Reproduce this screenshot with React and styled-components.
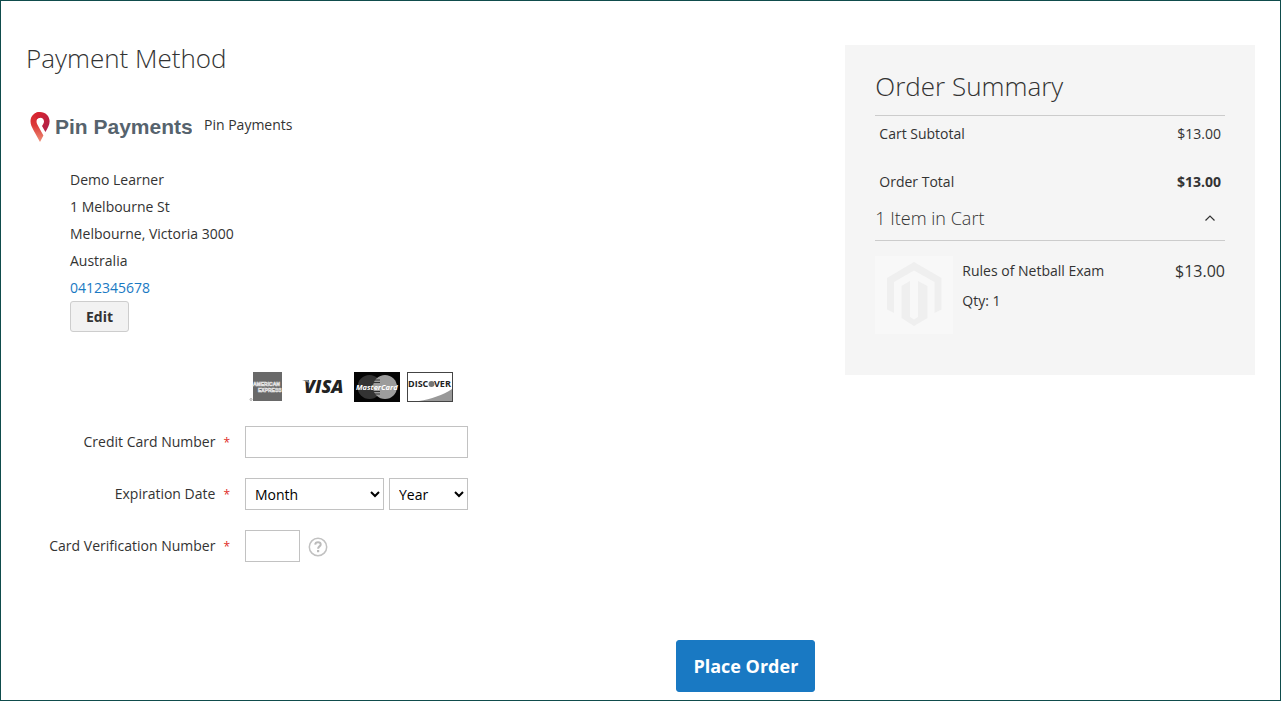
import { useState } from "react";
import styled, { createGlobalStyle } from "styled-components";

const ADDRESS_LINES = [
  "Demo Learner",
  "1 Melbourne St",
  "Melbourne, Victoria 3000",
  "Australia",
];

const MONTHS = ["01", "02", "03", "04", "05", "06", "07", "08", "09", "10", "11", "12"];
const YEARS = ["2024", "2025", "2026", "2027", "2028", "2029", "2030"];

const EMPTY_CARD = {
  number: "",
  month: "",
  year: "",
  cvv: "",
};

export default function App() {
  const [card, setCard] = useState(EMPTY_CARD);
  const [isCartOpen, setIsCartOpen] = useState(true);

  const handleChange = (e) => {
    const { name, value } = e.target;
    setCard({ ...card, [name]: value });
  };

  const handleSubmit = (e) => {
    e.preventDefault();
  };

  return (
    <>
      <GlobalStyle />
      <Page>
        <Payment onSubmit={handleSubmit}>
          <Title as="h1">Payment Method</Title>

          <MethodHeader>
            <PinLogo />
            <span>Pin Payments</span>
          </MethodHeader>

          <Address>
            {ADDRESS_LINES.map((line) => (
              <div key={line}>{line}</div>
            ))}
            <a href="tel:0412345678">0412345678</a>
            <EditButton type="button">Edit</EditButton>
          </Address>

          <CardLogos>
            <AmexLogo />
            <VisaLogo />
            <MasterCardLogo />
            <DiscoverLogo />
          </CardLogos>

          <Fields>
            <Field>
              <Label htmlFor="number">Credit Card Number</Label>
              <Input id="number" name="number" type="text" value={card.number} onChange={handleChange} />
            </Field>
            <Field>
              <Label htmlFor="month">Expiration Date</Label>
              <Controls>
                <Select
                  id="month"
                  name="month"
                  aria-label="Month"
                  $grow
                  value={card.month}
                  onChange={handleChange}
                >
                  <option value="">Month</option>
                  {MONTHS.map((month) => (
                    <option key={month}>{month}</option>
                  ))}
                </Select>
                <Select name="year" aria-label="Year" value={card.year} onChange={handleChange}>
                  <option value="">Year</option>
                  {YEARS.map((year) => (
                    <option key={year}>{year}</option>
                  ))}
                </Select>
              </Controls>
            </Field>
            <Field>
              <Label htmlFor="cvv">Card Verification Number</Label>
              <CvvControls>
                <Input id="cvv" name="cvv" type="text" $short value={card.cvv} onChange={handleChange} />
                <HelpButton type="button" aria-label="What is this?">
                  <HelpIcon />
                </HelpButton>
              </CvvControls>
            </Field>
          </Fields>

          <PlaceOrder type="submit">Place Order</PlaceOrder>
        </Payment>

        <Summary>
          <SummaryTitle>Order Summary</SummaryTitle>
          <Totals>
            <tbody>
              <tr>
                <th scope="row">Cart Subtotal</th>
                <td>$13.00</td>
              </tr>
              <tr className="grand">
                <th scope="row">Order Total</th>
                <td>$13.00</td>
              </tr>
            </tbody>
          </Totals>
          <CartToggle type="button" aria-expanded={isCartOpen} onClick={() => setIsCartOpen(!isCartOpen)}>
            <span>1 Item in Cart</span>
            <Chevron $open={isCartOpen} width="12" height="8" viewBox="0 0 12 8">
              <path d="M1.500 6.500 6 2l4.500 4.500" fill="none" stroke="#333" strokeWidth="1.200" />
            </Chevron>
          </CartToggle>
          {isCartOpen && (
            <CartItem>
              <Placeholder />
              <div className="details">
                <div>Rules of Netball Exam</div>
                <div>Qty: 1</div>
              </div>
              <span className="price">$13.00</span>
            </CartItem>
          )}
        </Summary>
      </Page>
    </>
  );
}

function PinLogo() {
  return (
    <svg width="166" height="32" viewBox="0 0 166 32" role="img" aria-label="Pin Payments">
      <defs>
        <linearGradient id="pin-left" x1="0" y1="0" x2="0" y2="1">
          <stop offset="0" stopColor="#d3222f" />
          <stop offset="0.45" stopColor="#dc3a38" />
          <stop offset="1" stopColor="#ee9078" />
        </linearGradient>
        <linearGradient id="pin-right" x1="0" y1="0" x2="1" y2="1">
          <stop offset="0" stopColor="#de242c" />
          <stop offset="1" stopColor="#a81f4c" />
        </linearGradient>
      </defs>
      <path
        d="M14 1C8.500 1 4.500 5 4.500 10.300c0 3 1.300 5.700 3 9L14 31l3.400-6.500L11.600 14C9.400 10 10.800 6.800 14.300 6.800z"
        fill="url(#pin-left)"
      />
      <path
        d="M9 2.300C10.500 1.400 12.200 1 14 1c5.500 0 9.600 4.100 9.600 9.300 0 3.600-1.900 6.700-4.200 10.800l-3.400-6.100c1.600-2.300 2-3.400 2-4.500 0-2.200-1.600-3.700-3.700-3.700-1.800 0-3 .8-3.800 2.200z"
        fill="url(#pin-right)"
      />
      <text x="29" y="23" fontFamily="'Liberation Sans', sans-serif" fontWeight="700" fontSize="21" fill="#56636d">
        Pin Payments
      </text>
    </svg>
  );
}

function AmexLogo() {
  return (
    <svg width="46" height="31" viewBox="0 0 46 31" role="img" aria-label="American Express">
      <rect x="5" y="1" width="29" height="29" fill="#696969" />
      <g fontFamily="'Liberation Sans', sans-serif" fontWeight="700" fill="#696969" stroke="#e2e2e2" strokeWidth="0.6">
        <text x="5" y="15" fontSize="5">AMERICAN</text>
        <text x="10" y="21" fontSize="5">EXPRESS</text>
      </g>
      <circle cx="3" cy="28.500" r="1" fill="none" stroke="#999" strokeWidth="0.8" />
    </svg>
  );
}

function VisaLogo() {
  return (
    <svg width="46" height="31" viewBox="0 0 46 31" role="img" aria-label="Visa">
      <text x="3" y="22" fontFamily="'Open Sans', sans-serif" fontWeight="800" fontStyle="italic" fontSize="18" fill="#222">
        VISA
      </text>
      <path d="M1 9h6l2 4C7 11 4 10 1 9z" fill="#888" />
    </svg>
  );
}

function MasterCardLogo() {
  return (
    <svg width="46" height="31" viewBox="0 0 46 31" role="img" aria-label="MasterCard">
      <rect y="1" width="46" height="30" fill="#050505" />
      <circle cx="15.500" cy="16" r="12" fill="#333" />
      <circle cx="31" cy="16" r="12" fill="#9c9c9c" />
      <path d="M20 9h6M19 11.500h7M19 20.500h7M20 23h6" stroke="#333" strokeWidth="1" />
      <text x="2" y="19" fontFamily="'Open Sans', sans-serif" fontWeight="700" fontStyle="italic" fontSize="7.500" fill="#fff">
        MasterCard
      </text>
    </svg>
  );
}

function DiscoverLogo() {
  return (
    <svg width="46" height="31" viewBox="0 0 46 31" role="img" aria-label="Discover">
      <path d="M45 18v12H12c12-2 24-6 33-12z" fill="#999" />
      <rect x="0.500" y="1.500" width="45" height="29" fill="none" stroke="#444" />
      <g fontFamily="'Open Sans', sans-serif" fontWeight="700" fontSize="9" fill="#222">
        <text x="1" y="16">DISC</text>
        <text x="27" y="16">VER</text>
      </g>
      <circle cx="24.500" cy="13" r="3" fill="#777" />
    </svg>
  );
}

function HelpIcon() {
  return (
    <svg width="20" height="20" viewBox="0 0 20 20" aria-hidden="true">
      <circle cx="10" cy="10" r="8.700" fill="none" stroke="#c1c1c1" strokeWidth="1.500" />
      <path d="M7.200 7.600C7.300 6 8.500 5.200 10 5.200c1.600 0 2.700.9 2.700 2.200 0 2-2.600 2-2.600 4.300" fill="none" stroke="#bbb" strokeWidth="2" />
      <rect x="9" y="13" width="2.200" height="2.200" fill="#bbb" />
    </svg>
  );
}

function Placeholder() {
  return (
    <svg width="78" height="78" viewBox="0 0 78 78" aria-hidden="true">
      <rect width="78" height="78" fill="#f8f8f8" />
      <g fill="#efefef">
        <path d="M39 6 66.500 22v31.500L59.500 57V26L39 14.500 19 26v31l-7-3.500V22z" />
        <path d="M26.500 30 35 25v36l4 2.500L43 61V25l9.500 5v32L39 70l-12.500-8z" />
      </g>
    </svg>
  );
}

const GlobalStyle = createGlobalStyle`
  * {
    box-sizing: border-box;
  }

  body {
    margin: 0;
    background: #fff;
    color: #333;
    font-family: "Open Sans", sans-serif;
    font-size: 14px;
    line-height: 20px;
  }

  button, input, select {
    font-family: inherit;
    font-size: 14px;
  }
`;

const Page = styled.main`
  display: grid;
  grid-template-columns: 2fr 1fr;
  align-items: start;
  min-height: 100vh;
  padding: 44px 25px 8px;
  border: 1px solid #0f4c4c;
`;

const Payment = styled.form`
  display: flex;
  flex-direction: column;
  padding-right: 30px;
`;

const Title = styled.h2`
  margin: 0;
  font-size: 26px;
  font-weight: 300;
  line-height: 26px;
`;

const MethodHeader = styled.div`
  display: flex;
  gap: 12px;
  margin-top: 40px;

  span {
    padding-top: 4px;
  }
`;

const Address = styled.address`
  display: flex;
  flex-direction: column;
  align-items: flex-start;
  margin-top: 23px;
  padding-left: 44px;
  font-style: normal;
  line-height: 27px;

  a {
    color: #1979c3;
    text-decoration: none;
  }
`;

const EditButton = styled.button`
  height: 31px;
  padding: 0 15px;
  background: #f2f2f2;
  border: 1px solid #cdcdcd;
  border-radius: 3px;
  color: #333;
  font-weight: 700;
  cursor: pointer;
`;

const CardLogos = styled.div`
  display: flex;
  gap: 7px;
  margin-top: 39px;
  padding-left: 222px;
`;

const Fields = styled.div`
  display: flex;
  flex-direction: column;
  gap: 20px;
  margin-top: 24px;
`;

const Field = styled.div`
  display: grid;
  grid-template-columns: 219px 223px;
`;

const Label = styled.label`
  padding: 6px 15px 0 0;
  text-align: right;

  &::after {
    content: "*";
    margin-left: 8px;
    color: #e02b27;
    font-size: 12px;
  }
`;

const Controls = styled.div`
  display: flex;
  gap: 5px;
`;

const CvvControls = styled(Controls)`
  gap: 8px;
  align-items: center;
`;

const Input = styled.input`
  width: ${({ $short }) => ($short ? "55px" : "100%")};
  height: 32px;
  padding: 0 9px;
  border: 1px solid #c2c2c2;
  border-radius: 0;
`;

const Select = styled.select`
  flex: ${({ $grow }) => ($grow ? "1" : "0 0 79px")};
  height: 32px;
  padding: 0 0 0 5px;
  background: #fff;
  border: 1px solid #c2c2c2;
  border-radius: 0;
  color: #000;
`;

const HelpButton = styled.button`
  display: flex;
  padding: 2px 0 0;
  background: none;
  border: 0;
  cursor: pointer;
`;

const PlaceOrder = styled.button`
  align-self: flex-end;
  height: 52px;
  margin-top: 78px;
  padding: 0 16px;
  background: #1979c3;
  border: 1px solid #1979c3;
  border-radius: 3px;
  color: #fff;
  font-size: 18px;
  font-weight: 700;
  cursor: pointer;
`;

const Summary = styled.aside`
  padding: 28px 30px 41px;
  background: #f5f5f5;
`;

const SummaryTitle = styled(Title)`
  padding-bottom: 16px;
  border-bottom: 1px solid #ccc;
`;

const Totals = styled.table`
  width: 100%;
  border-collapse: collapse;

  th,
  td {
    padding: 8px 4px;
    font-weight: 400;
    text-align: left;
  }

  td {
    text-align: right;
  }

  .grand th,
  .grand td {
    padding-top: 20px;
  }

  .grand td {
    font-weight: 700;
  }
`;

const CartToggle = styled.button`
  display: flex;
  align-items: center;
  justify-content: space-between;
  width: 100%;
  padding: 8px 9px 12px 0;
  background: none;
  border: 0;
  border-bottom: 1px solid #ccc;
  color: #333;
  font-size: 18px;
  font-weight: 300;
  line-height: 20px;
  cursor: pointer;
`;

const Chevron = styled.svg`
  transform: ${({ $open }) => ($open ? "none" : "rotate(180deg)")};
`;

const CartItem = styled.div`
  display: grid;
  grid-template-columns: 78px 1fr auto;
  gap: 9px;
  padding-top: 15px;

  .details {
    display: flex;
    flex-direction: column;
    gap: 10px;
    padding-top: 5px;
  }

  .price {
    padding-top: 5px;
    font-size: 16px;
  }
`;
